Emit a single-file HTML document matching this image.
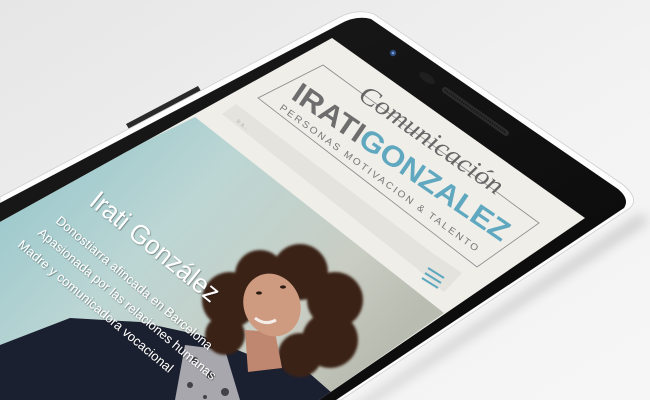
<!DOCTYPE html>
<html><head><meta charset="utf-8"><style>
html,body{margin:0;padding:0;width:650px;height:400px;overflow:hidden;background:#eeeeee}
svg{display:block}
text{font-family:"Liberation Sans",sans-serif}
</style></head><body>
<svg width="650" height="400" viewBox="0 0 650 400" xmlns="http://www.w3.org/2000/svg">
<defs>
<linearGradient id="bg" x1="0" y1="0" x2="1" y2="1">
<stop offset="0" stop-color="#e6e6e6"/><stop offset="0.6" stop-color="#f3f3f3"/><stop offset="1" stop-color="#f6f6f6"/></linearGradient>
<linearGradient id="photo" x1="0" y1="0" x2="1" y2="0.6">
<stop offset="0" stop-color="#8fc3ca"/><stop offset="0.45" stop-color="#bcd6d4"/><stop offset="0.8" stop-color="#c9cdc3"/><stop offset="1" stop-color="#b9bcb0"/></linearGradient>
<linearGradient id="body" x1="0" y1="0" x2="1" y2="1">
<stop offset="0" stop-color="#1c1c1c"/><stop offset="1" stop-color="#080808"/></linearGradient>
<clipPath id="scr"><polygon points="332,38 585,218 319,400 0,400 0,222"/></clipPath>
<filter id="sh" x="-20%" y="-20%" width="140%" height="140%"><feGaussianBlur stdDeviation="6"/></filter>
<filter id="bl"><feGaussianBlur stdDeviation="1.2"/></filter>
<filter id="ts"><feDropShadow dx="0.6" dy="0.8" stdDeviation="0.5" flood-color="#000" flood-opacity="0.45"/></filter>
</defs>
<rect width="650" height="400" fill="url(#bg)"/>
<polygon points="640,215 350,410 360,410 650,220" fill="#999" opacity="0.5" filter="url(#sh)"/>
<!-- side buttons -->
<polygon points="126,124 198,86 201,91 129,129" fill="#2a2a2a"/>
<polygon points="432,330 466,308 470,313 436,336" fill="#2a2a2a"/>
<!-- phone rim -->
<path d="M0,197 L338,18 Q356,8 374,14 L622,184 Q640,198 630,208 L341,400 L0,400 Z" fill="#fdfdfd" stroke="#cfcfcf" stroke-width="0.8"/>
<path d="M0,203 L340,24 Q356,15 371,19 L618,189 Q630,199 624,208 L336,400 L0,400 Z" fill="url(#body)"/>
<circle cx="393" cy="53" r="3.2" fill="#2d4a78"/><circle cx="393" cy="53" r="1.3" fill="#6f9be0"/>
<ellipse cx="427" cy="78" rx="9" ry="4" transform="rotate(34 427 78)" fill="#1f1f1f"/>
<line x1="445" y1="90" x2="506" y2="133" stroke="#2b2b2b" stroke-width="6" stroke-linecap="round"/>
<line x1="445" y1="90" x2="506" y2="133" stroke="#111" stroke-width="2" stroke-dasharray="1 1.5"/>
<!-- screen -->
<g clip-path="url(#scr)">
<rect width="650" height="400" fill="#efeee9"/>
<polygon points="195,117 444,313 319,400 0,400 0,213" fill="url(#photo)"/>
<polygon points="222,114 236,104 431,252 415,267" fill="#e4e3de"/>
<text x="0" y="0" font-size="6" fill="#b5b5b0" transform="translate(236,122) rotate(37)">Ir a...</text>
<polygon points="415,267 431,252 462,273 444,292" fill="#e4e3de"/>
<g stroke="#5fa8bf" stroke-width="2.2">
<line x1="428" y1="268" x2="444" y2="278"/><line x1="425" y1="273" x2="441" y2="283"/><line x1="422" y1="278" x2="438" y2="288"/></g>
<polygon points="323,65 539,223 477,267 258,98" fill="none" stroke="#8a8a8a" stroke-width="0.8"/>
<text font-size="29" font-weight="bold" textLength="256" lengthAdjust="spacingAndGlyphs" transform="translate(290,98) rotate(34.3)"><tspan fill="#6d6d6d">IRATI</tspan><tspan fill="#5fa8bf">GONZALEZ</tspan></text>
<text font-size="9.5" fill="#777" letter-spacing="2" textLength="245" lengthAdjust="spacingAndGlyphs" transform="translate(279,109) rotate(36)">PERSONAS MOTIVACION &amp; TALENTO</text>
<text font-size="26" font-style="italic" fill="#666" textLength="170" lengthAdjust="spacingAndGlyphs" style="font-family:'Liberation Serif',serif" transform="translate(357,98) rotate(35)">Comunicación</text>
<!-- woman -->
<polygon points="0,345 70,318 140,322 200,335 250,355 300,365 340,400 0,400" fill="#1b2030"/>
<polygon points="185,345 225,350 240,400 175,400" fill="#a7a7ad"/>
<g fill="#2a2a30" opacity="0.8"><circle cx="195" cy="360" r="3"/><circle cx="210" cy="375" r="4"/><circle cx="190" cy="385" r="3"/><circle cx="225" cy="392" r="4"/><circle cx="205" cy="397" r="2"/></g>
<g fill="#3b2418" filter="url(#bl)">
<circle cx="230" cy="300" r="28"/><circle cx="260" cy="275" r="25"/><circle cx="300" cy="272" r="28"/><circle cx="335" cy="300" r="28"/><circle cx="330" cy="340" r="28"/><circle cx="300" cy="355" r="22"/><circle cx="225" cy="335" r="20"/></g>
<polygon points="245,330 275,332 282,368 248,372" fill="#c08770"/>
<ellipse cx="272" cy="305" rx="28" ry="32" transform="rotate(-25 272 305)" fill="#cf9b80"/>
<path d="M255,318 Q265,326 276,320" stroke="#f4eeea" stroke-width="3" fill="none"/>
<ellipse cx="259" cy="293" rx="3" ry="1.6" fill="#2a1a12"/><ellipse cx="283" cy="287" rx="3" ry="1.6" fill="#2a1a12"/>
<g fill="#fff" filter="url(#ts)">
<text font-size="27" textLength="158" lengthAdjust="spacingAndGlyphs" transform="translate(88,204) rotate(39)">Irati González</text>
<text font-size="13" textLength="200" lengthAdjust="spacingAndGlyphs" transform="translate(55,222) rotate(40)">Donostiarra afincada en Barcelona</text>
<text font-size="13" textLength="228" lengthAdjust="spacingAndGlyphs" transform="translate(37,234) rotate(40)">Apasionada por las relaciones humanas</text>
<text font-size="13" textLength="198" lengthAdjust="spacingAndGlyphs" transform="translate(17,246) rotate(40)">Madre y comunicadora vocacional</text>
</g>
</g>
</svg>
</body></html>
